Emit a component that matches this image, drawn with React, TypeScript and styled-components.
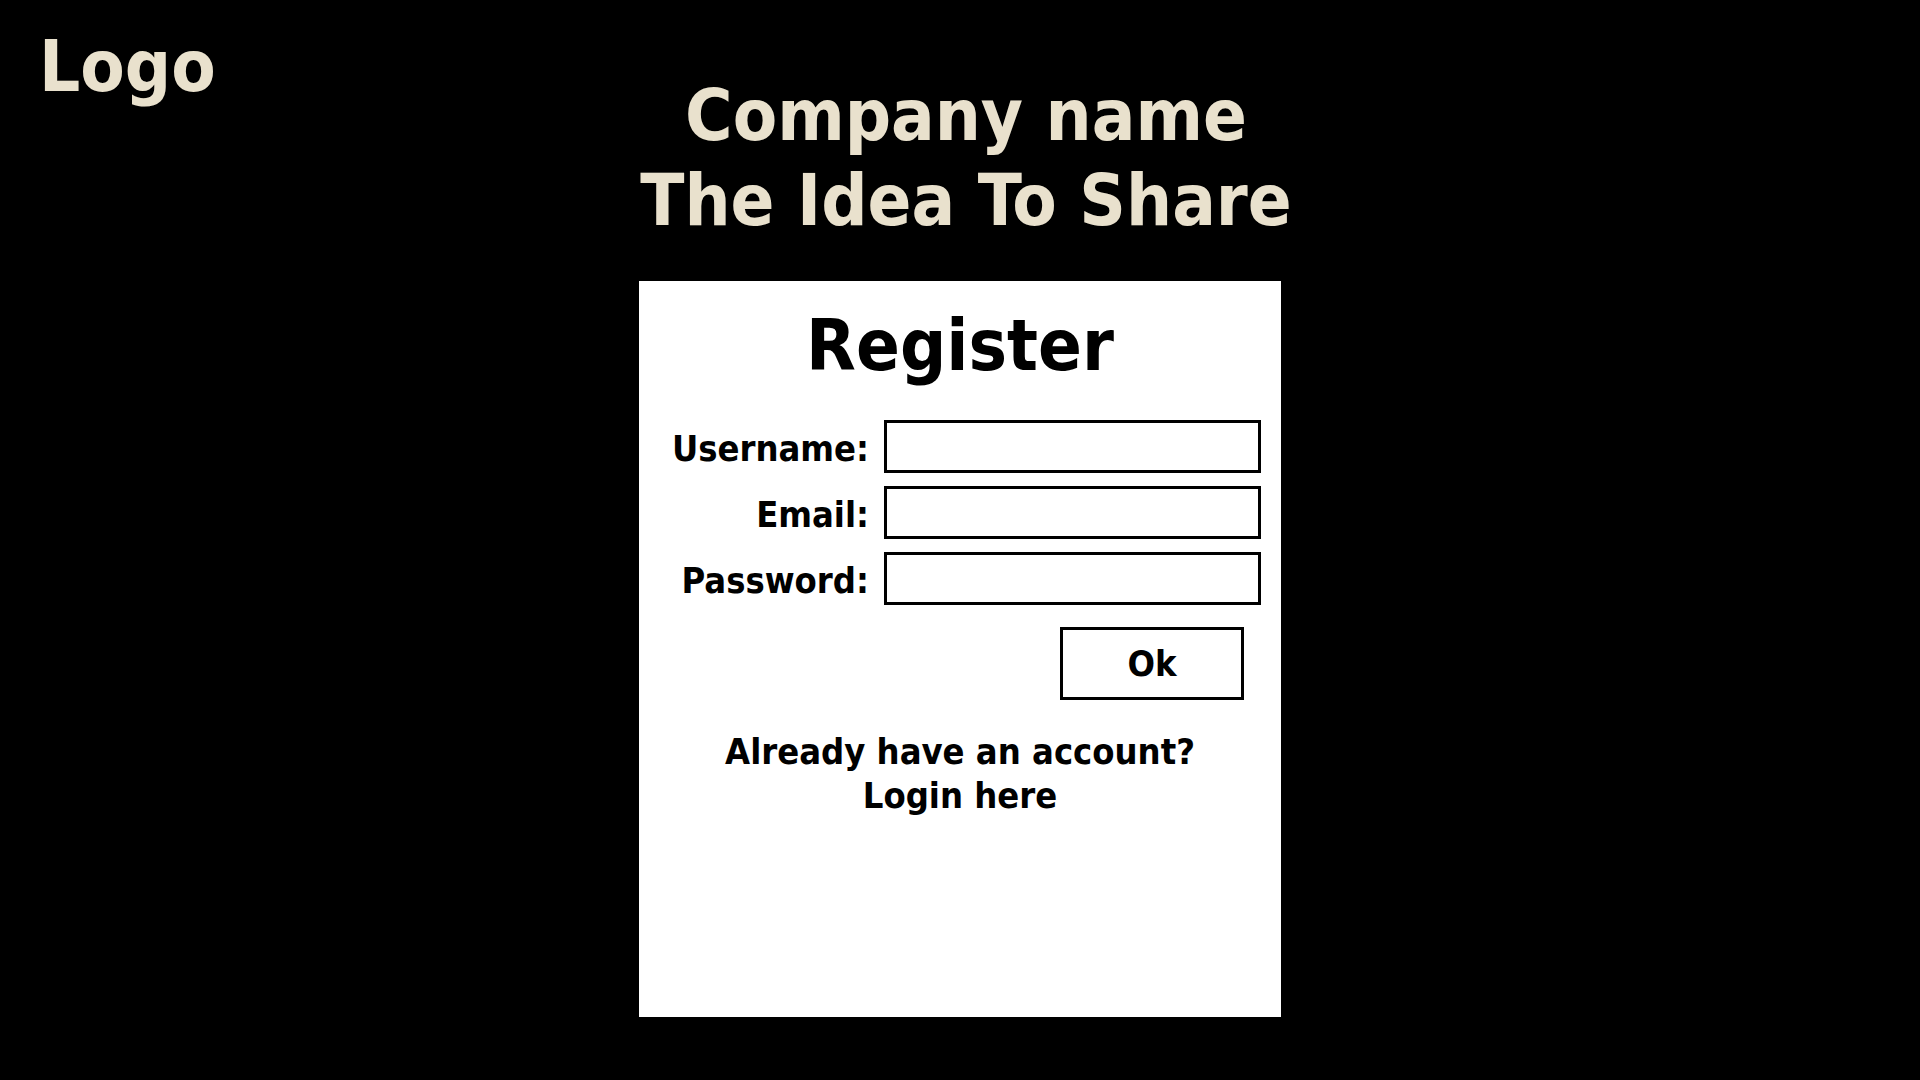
import styled, { createGlobalStyle } from "styled-components";

const GlobalStyle = createGlobalStyle`
  html, body {
    margin: 0;
    padding: 0;
    background-color: #000000;
  }
  body {
    font-family: "DejaVu Sans Condensed", "DejaVu Sans", "Liberation Sans", sans-serif;
    font-stretch: condensed;
    font-weight: bold;
  }
`

const Page = styled.div`
  min-height: 1080px;
  display: flex;
  flex-direction: column;
  align-items: center;
`

const TopBar = styled.header`
  width: 100%;
  display: grid;
  grid-template-columns: 1fr auto 1fr;
  align-items: start;
`

const Logo = styled.div`
  padding: 24px 0 0 39px;
  font-size: 72px;
  line-height: 84px;
  color: #e9e1cd;
`

const Title = styled.h1`
  margin: 73px 0 0;
  padding-left: 12px;
  font-size: 72px;
  line-height: 85px;
  font-weight: bold;
  color: #e9e1cd;
  text-align: center;
`

const Card = styled.main`
  box-sizing: border-box;
  width: 642px;
  height: 736px;
  margin-top: 38px;
  padding-top: 22px;
  background-color: #ffffff;
  color: #000000;
  display: flex;
  flex-direction: column;
  align-items: center;
`

const CardTitle = styled.h2`
  margin: 0 0 33px;
  font-size: 72px;
  line-height: 84px;
  font-weight: bold;
`

const Form = styled.form`
  align-self: stretch;
  display: flex;
  flex-direction: column;
  align-items: flex-end;
  padding-right: 20px;
`

const Fields = styled.div`
  display: grid;
  grid-template-columns: auto 377px;
  column-gap: 15px;
  row-gap: 13px;
  align-items: center;
`

const Label = styled.label`
  padding-top: 4px;
  font-size: 36px;
  text-align: right;
  white-space: nowrap;
`

const Input = styled.input`
  box-sizing: border-box;
  width: 377px;
  height: 53px;
  border: 3px solid #000000;
  border-radius: 0;
  background: #ffffff;
  padding: 0 10px;
  font-family: inherit;
  font-size: 28px;
  outline: none;
`

const OkButton = styled.button`
  box-sizing: border-box;
  width: 184px;
  height: 73px;
  margin: 22px 17px 0 0;
  border: 3px solid #000000;
  background: #ffffff;
  color: #000000;
  font-family: inherit;
  font-stretch: condensed;
  font-weight: bold;
  font-size: 36px;
  cursor: pointer;
`

const LoginText = styled.p`
  margin: 30px 0 0;
  font-size: 36px;
  line-height: 44px;
  text-align: center;
`

export default function App() {
  return (
    <>
      <GlobalStyle />
      <Page>
        <TopBar>
          <Logo>Logo</Logo>
          <Title>
            Company name
            <br />
            The Idea To Share
          </Title>
        </TopBar>
        <Card>
          <CardTitle>Register</CardTitle>
          <Form onSubmit={(e) => e.preventDefault()}>
            <Fields>
              <Label htmlFor="username">Username:</Label>
              <Input id="username" type="text" />
              <Label htmlFor="email">Email:</Label>
              <Input id="email" type="email" />
              <Label htmlFor="password">Password:</Label>
              <Input id="password" type="password" />
            </Fields>
            <OkButton type="submit">Ok</OkButton>
          </Form>
          <LoginText>
            Already have an account?
            <br />
            Login here
          </LoginText>
        </Card>
      </Page>
    </>
  )
}
